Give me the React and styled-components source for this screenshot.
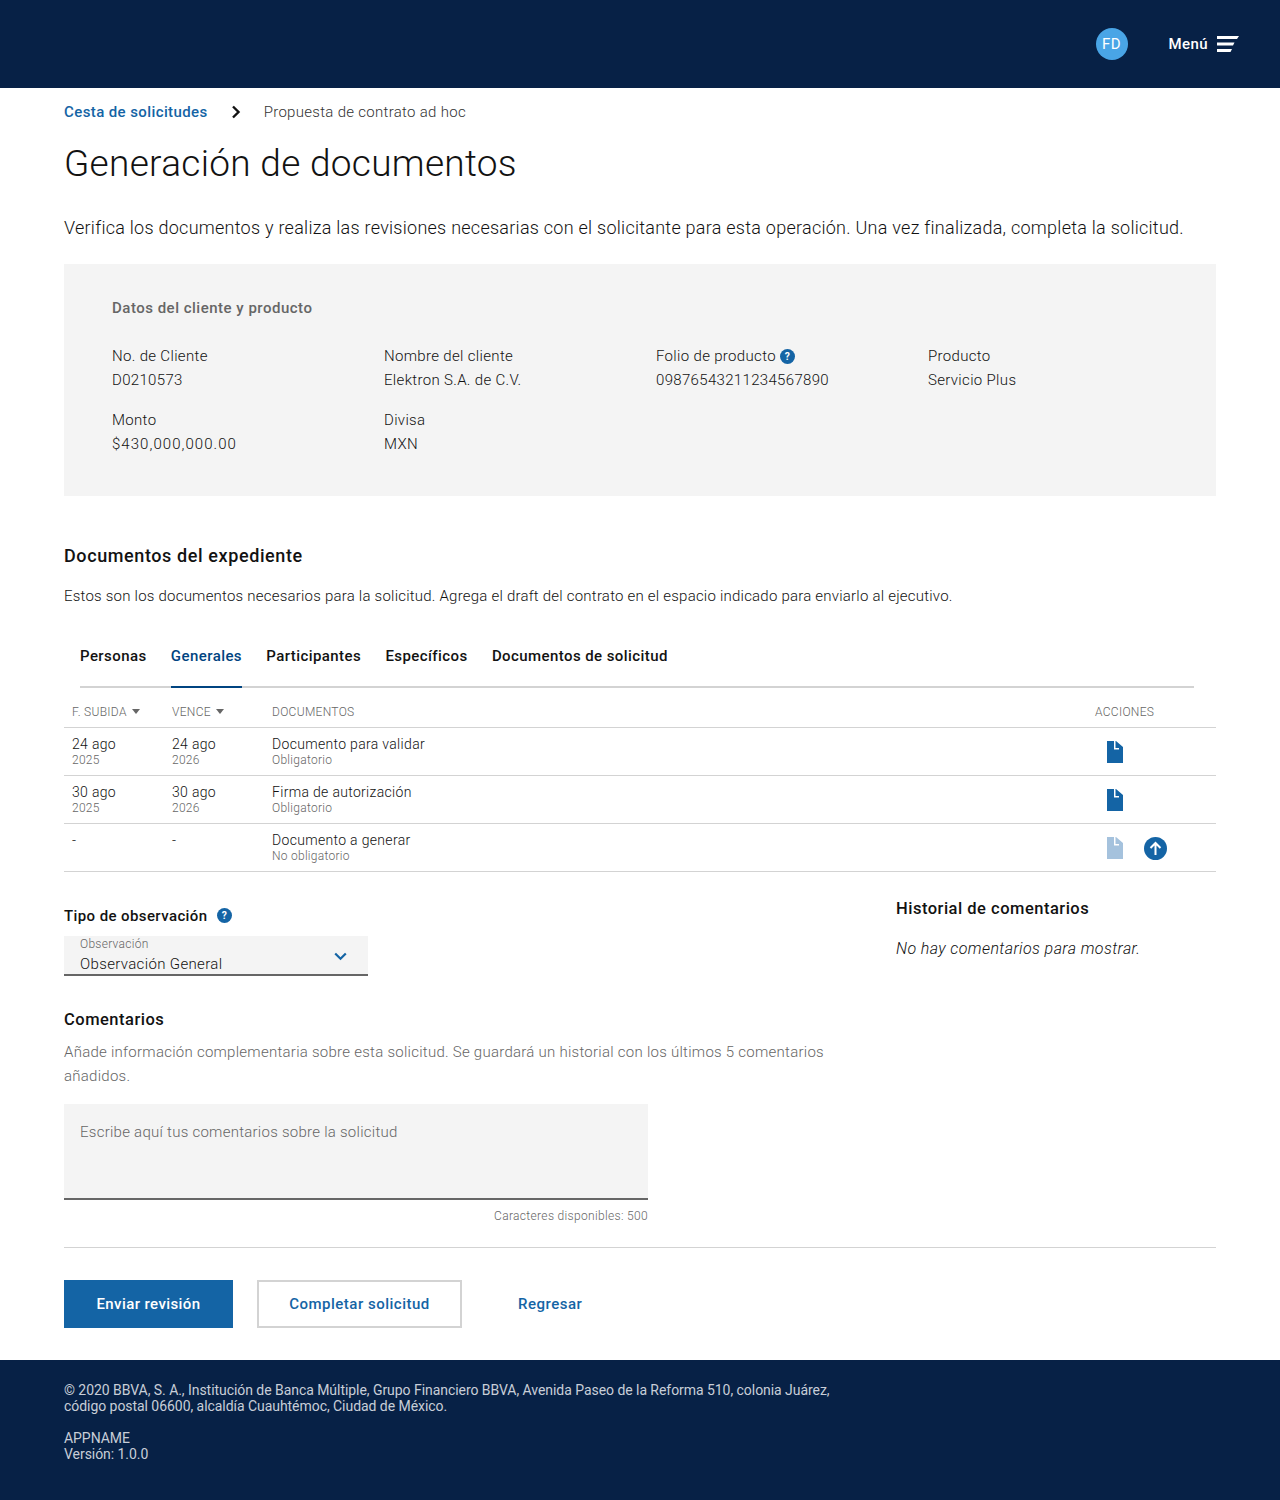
import styled, { createGlobalStyle } from "styled-components";

const GlobalStyle = createGlobalStyle`
  html, body {
    margin: 0;
    padding: 0;
    background: #fff;
    font-family: Roboto, "Liberation Sans", sans-serif;
    color: #121212;
  }
  * { box-sizing: border-box; }
`;

const Header = styled.header`
  height: 88px;
  background: #072146;
  display: flex;
  align-items: center;
  justify-content: flex-end;
  padding-right: 41px;
`;

const Avatar = styled.div`
  width: 32px;
  height: 32px;
  border-radius: 50%;
  background: #49a5e6;
  color: #fff;
  font-size: 15px;
  letter-spacing: 0.4px;
  display: flex;
  align-items: center;
  justify-content: center;
  margin-right: 41px;
`;

const MenuLabel = styled.span`
  color: #fff;
  font-size: 15px;
  font-weight: 500;
  letter-spacing: 0.4px;
  margin-right: 9px;
`;

const Main = styled.main`
  padding: 0 64px;
`;

const Breadcrumb = styled.nav`
  height: 48px;
  display: flex;
  align-items: center;
  font-size: 15px;
`;

const Crumb = styled.a`
  color: #1464a5;
  font-weight: 500;
  letter-spacing: 0.4px;
`;

const CrumbCurrent = styled.span`
  color: #333;
  font-weight: 300;
  letter-spacing: 0.3px;
`;

const CrumbArrow = styled.svg`
  margin: 0 23px 0 23px;
`;

const Title = styled.h1`
  margin: 1px 0 0;
  height: 54px;
  line-height: 54px;
  font-size: 37px;
  font-weight: 300;
  letter-spacing: 0.3px;
`;

const Intro = styled.p`
  margin: 25px 0 0;
  height: 24px;
  line-height: 24px;
  font-size: 18px;
  font-weight: 300;
  letter-spacing: 0.26px;
`;

const Panel = styled.section`
  margin-top: 24px;
  height: 232px;
  background: #f4f4f4;
  padding: 32px 48px 0;
`;

const PanelTitle = styled.h2`
  margin: 0 0 24px;
  height: 24px;
  line-height: 24px;
  font-size: 15px;
  font-weight: 500;
  letter-spacing: 0.5px;
  color: #666;
`;

const DataGrid = styled.div`
  display: grid;
  grid-template-columns: repeat(4, 272px);
  row-gap: 16px;
`;

const Datum = styled.div`
  font-size: 15px;
  line-height: 24px;
  font-weight: 300;
  letter-spacing: 0.33px;
  color: #121212;
`;

const DatumLabel = styled.div`
  display: flex;
  align-items: center;
  gap: 4px;
`;

const DatumValue = styled.div`
  letter-spacing: ${(p) => (p.$amount ? "1.05px" : "0.33px")};
`;

const SectionTitle = styled.h2`
  margin: 48px 0 0;
  height: 24px;
  line-height: 24px;
  font-size: 18px;
  font-weight: 500;
  letter-spacing: 0.6px;
`;

const SectionText = styled.p`
  margin: 16px 0 0;
  height: 24px;
  line-height: 24px;
  font-size: 15px;
  font-weight: 300;
  letter-spacing: 0.22px;
`;

const Tabs = styled.div`
  margin: 24px 22px 0 16px;
  height: 56px;
  display: flex;
  gap: 24.3px;
  border-bottom: 2px solid #d3d3d3;
`;

const Tab = styled.div`
  height: 56px;
  padding-top: 12px;
  line-height: 24px;
  font-size: 15px;
  font-weight: 500;
  letter-spacing: 0.42px;
  color: ${(p) => (p.$active ? "#004481" : "#121212")};
  border-bottom: 2px solid ${(p) => (p.$active ? "#004481" : "transparent")};
`;

const Table = styled.table`
  width: 100%;
  border-collapse: collapse;
  table-layout: fixed;
`;

const Th = styled.th`
  height: 39px;
  padding: 9px 0 0 8px;
  text-align: left;
  font-size: 12px;
  font-weight: 300;
  letter-spacing: 0.3px;
  color: #666;
  border-bottom: 1px solid #d3d3d3;
  width: ${(p) => p.$width || "auto"};
`;

const Td = styled.td`
  height: 48px;
  padding: 8px 0 0 8px;
  vertical-align: top;
  border-bottom: 1px solid #d3d3d3;
`;

const CellMain = styled.div`
  font-size: 14px;
  line-height: 16px;
  font-weight: 300;
  letter-spacing: 0.32px;
`;

const Sub = styled.div`
  font-size: 12px;
  line-height: 16px;
  font-weight: 300;
  letter-spacing: 0.27px;
  color: #666;
`;

const SortCaret = styled.span`
  display: inline-block;
  margin-left: 5px;
  vertical-align: 2px;
  border-left: 4px solid transparent;
  border-right: 4px solid transparent;
  border-top: 5px solid #666;
`;

const Actions = styled.div`
  display: flex;
  align-items: center;
  gap: 21px;
  padding: 5px 0 0 12px;
`;

const Lower = styled.div`
  display: grid;
  grid-template-columns: 832px 320px;
`;

const FieldTitle = styled.h3`
  margin: 32px 0 0;
  height: 24px;
  line-height: 24px;
  font-size: ${(p) => (p.$large ? "16.5px" : "15px")};
  letter-spacing: ${(p) => (p.$large ? "0.5px" : "0.4px")};
  font-weight: 500;
  display: flex;
  align-items: center;
  gap: 9px;
`;

const Select = styled.div`
  margin-top: 8px;
  width: 304px;
  height: 40px;
  background: #f4f4f4;
  border-bottom: 2px solid #666;
  padding: 3px 21px 0 16px;
  display: flex;
  align-items: center;
  justify-content: space-between;
`;

const SelectLabel = styled.div`
  font-size: 12px;
  line-height: 14px;
  font-weight: 300;
  letter-spacing: 0.27px;
  color: #666;
`;

const SelectValue = styled.div`
  margin-top: 2px;
  font-size: 15px;
  line-height: 22px;
  font-weight: 300;
  letter-spacing: 0.35px;
`;

const Hint = styled.p`
  margin: 8px 0 0;
  max-width: 776px;
  line-height: 24px;
  font-size: 15px;
  font-weight: 300;
  letter-spacing: 0.26px;
  color: #666;
`;

const TextBox = styled.div`
  margin-top: 16px;
  width: 584px;
  height: 96px;
  background: #f4f4f4;
  border-bottom: 2px solid #666;
  padding: 16px;
  line-height: 24px;
  font-size: 15px;
  font-weight: 300;
  letter-spacing: 0.26px;
  color: #666;
`;

const Counter = styled.div`
  width: 584px;
  margin-top: 8px;
  text-align: right;
  font-size: 12px;
  line-height: 16px;
  font-weight: 300;
  letter-spacing: 0.33px;
  color: #666;
`;

const History = styled.aside`
  padding-top: 25px;
`;

const HistoryTitle = styled.h3`
  margin: 0;
  height: 24px;
  line-height: 24px;
  font-size: 16.5px;
  font-weight: 500;
  letter-spacing: 0.5px;
`;

const HistoryEmpty = styled.p`
  margin: 16px 0 0;
  line-height: 24px;
  font-size: 16px;
  font-weight: 300;
  font-style: italic;
  letter-spacing: 0.4px;
`;

const Divider = styled.hr`
  margin: 23px 0 0;
  border: 0;
  border-top: 1px solid #d3d3d3;
`;

const ButtonRow = styled.div`
  margin-top: 32px;
  display: flex;
  align-items: center;
`;

const PrimaryButton = styled.button`
  width: 169px;
  height: 48px;
  border: 0;
  background: #1464a5;
  color: #fff;
  font: 500 15px Roboto, sans-serif;
  letter-spacing: 0.4px;
`;

const SecondaryButton = styled.button`
  width: 205px;
  height: 48px;
  margin-left: 24px;
  border: 2px solid #d3d3d3;
  background: #fff;
  color: #1464a5;
  font: 500 15px Roboto, sans-serif;
  letter-spacing: 0.5px;
`;

const LinkButton = styled.a`
  margin-left: 56px;
  color: #1464a5;
  font-size: 15px;
  font-weight: 500;
  letter-spacing: 0.5px;
`;

const Footer = styled.footer`
  margin-top: 32px;
  height: 140px;
  background: #072146;
  padding: 22px 64px 0;
  color: #c8ced8;
  font-size: 14px;
  letter-spacing: -0.05px;
  line-height: 16px;
`;

const FooterBlock = styled.p`
  margin: 0 0 16px;
`;

function HelpIcon({ size = 15 }) {
  return (
    <svg width={size} height={size} viewBox="0 0 16 16">
      <circle cx="8" cy="8" r="8" fill="#1464a5" />
      <text x="8" y="12" textAnchor="middle" fontSize="11" fontWeight="700" fill="#fff" fontFamily="Roboto, sans-serif">?</text>
    </svg>
  );
}

function DocIcon({ light }) {
  return (
    <svg width="16" height="22" viewBox="0 0 16 22">
      <path
        fillRule="evenodd"
        d="M0 0H9L16 6V22H0ZM7 0V8.500H12V7H8.500V0Z"
        fill={light ? "#a5c2dd" : "#1464a5"}
      />
    </svg>
  );
}

function UploadIcon() {
  return (
    <svg width="23" height="23" viewBox="0 0 23 23">
      <circle cx="11.5" cy="11.5" r="11.5" fill="#1464a5" />
      <path d="M11.5 18V6M6.5 11L11.5 6L16.5 11" fill="none" stroke="#fff" strokeWidth="2" />
    </svg>
  );
}

const rows = [
  { up: ["24 ago", "2025"], due: ["24 ago", "2026"], doc: "Documento para validar", req: "Obligatorio" },
  { up: ["30 ago", "2025"], due: ["30 ago", "2026"], doc: "Firma de autorización", req: "Obligatorio" },
  { up: ["-"], due: ["-"], doc: "Documento a generar", req: "No obligatorio", upload: true },
];

const data = [
  { label: "No. de Cliente", value: "D0210573" },
  { label: "Nombre del cliente", value: "Elektron S.A. de C.V." },
  { label: "Folio de producto", value: "09876543211234567890", help: true },
  { label: "Producto", value: "Servicio Plus" },
  { label: "Monto", value: "$430,000,000.00", amount: true },
  { label: "Divisa", value: "MXN" },
];

const tabs = ["Personas", "Generales", "Participantes", "Específicos", "Documentos de solicitud"];

export default function App() {
  return (
    <>
      <GlobalStyle />
      <Header>
        <Avatar>FD</Avatar>
        <MenuLabel>Menú</MenuLabel>
        <svg width="22" height="16" viewBox="0 0 22 16">
          <path d="M0 0H22L20 3H0ZM0 6.500H17.500L16 9.500H0ZM0 13H15L13.500 16H0Z" fill="#fff" />
        </svg>
      </Header>
      <Main>
        <Breadcrumb>
          <Crumb>Cesta de solicitudes</Crumb>
          <CrumbArrow width="10" height="14" viewBox="0 0 10 14">
            <path d="M2 1.500L7.500 7L2 12.500" fill="none" stroke="#121212" strokeWidth="2.400" />
          </CrumbArrow>
          <CrumbCurrent>Propuesta de contrato ad hoc</CrumbCurrent>
        </Breadcrumb>
        <Title>Generación de documentos</Title>
        <Intro>Verifica los documentos y realiza las revisiones necesarias con el solicitante para esta operación. Una vez finalizada, completa la solicitud.</Intro>
        <Panel>
          <PanelTitle>Datos del cliente y producto</PanelTitle>
          <DataGrid>
            {data.map((d) => (
              <Datum key={d.label}>
                <DatumLabel>{d.label}{d.help && <HelpIcon />}</DatumLabel>
                <DatumValue $amount={d.amount}>{d.value}</DatumValue>
              </Datum>
            ))}
          </DataGrid>
        </Panel>
        <SectionTitle>Documentos del expediente</SectionTitle>
        <SectionText>Estos son los documentos necesarios para la solicitud. Agrega el draft del contrato en el espacio indicado para enviarlo al ejecutivo.</SectionText>
        <Tabs>
          {tabs.map((t) => (
            <Tab key={t} $active={t === "Generales"}>{t}</Tab>
          ))}
        </Tabs>
        <Table>
          <thead>
            <tr>
              <Th $width="100px">F. SUBIDA<SortCaret /></Th>
              <Th $width="100px">VENCE<SortCaret /></Th>
              <Th>DOCUMENTOS</Th>
              <Th $width="129px">ACCIONES</Th>
            </tr>
          </thead>
          <tbody>
            {rows.map((r) => (
              <tr key={r.doc}>
                <Td><CellMain>{r.up[0]}</CellMain><Sub>{r.up[1]}</Sub></Td>
                <Td><CellMain>{r.due[0]}</CellMain><Sub>{r.due[1]}</Sub></Td>
                <Td><CellMain>{r.doc}</CellMain><Sub>{r.req}</Sub></Td>
                <Td>
                  <Actions>
                    <DocIcon light={r.upload} />
                    {r.upload && <UploadIcon />}
                  </Actions>
                </Td>
              </tr>
            ))}
          </tbody>
        </Table>
        <Lower>
          <div>
            <FieldTitle>Tipo de observación <HelpIcon /></FieldTitle>
            <Select>
              <div>
                <SelectLabel>Observación</SelectLabel>
                <SelectValue>Observación General</SelectValue>
              </div>
              <svg width="13" height="9" viewBox="0 0 13 9">
                <path d="M1.200 1.500L6.500 6.800L11.800 1.500" fill="none" stroke="#1464a5" strokeWidth="2.200" />
              </svg>
            </Select>
            <FieldTitle $large>Comentarios</FieldTitle>
            <Hint>Añade información complementaria sobre esta solicitud. Se guardará un historial con los últimos 5 comentarios añadidos.</Hint>
            <TextBox>Escribe aquí tus comentarios sobre la solicitud</TextBox>
            <Counter>Caracteres disponibles: 500</Counter>
          </div>
          <History>
            <HistoryTitle>Historial de comentarios</HistoryTitle>
            <HistoryEmpty>No hay comentarios para mostrar.</HistoryEmpty>
          </History>
        </Lower>
        <Divider />
        <ButtonRow>
          <PrimaryButton>Enviar revisión</PrimaryButton>
          <SecondaryButton>Completar solicitud</SecondaryButton>
          <LinkButton>Regresar</LinkButton>
        </ButtonRow>
      </Main>
      <Footer>
        <FooterBlock>© 2020 BBVA, S. A., Institución de Banca Múltiple, Grupo Financiero BBVA, Avenida Paseo de la Reforma 510, colonia Juárez,<br />código postal 06600, alcaldía Cuauhtémoc, Ciudad de México.</FooterBlock>
        <FooterBlock>APPNAME<br />Versión: 1.0.0</FooterBlock>
      </Footer>
    </>
  );
}
